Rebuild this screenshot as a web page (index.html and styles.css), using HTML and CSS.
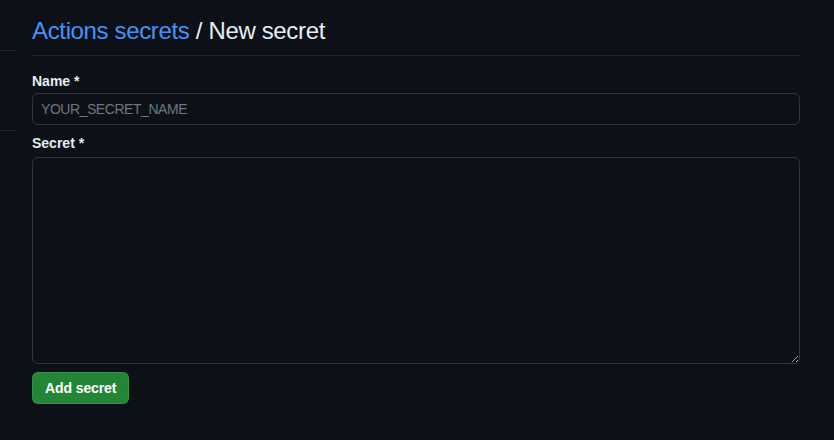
FILE: index.html
```html
<!DOCTYPE html>
<html>
<head>
<meta charset="utf-8">
<link rel="stylesheet" href="styles.css">
</head>
<body>
<div class="page">
  <aside class="sidebar">
    <div class="side-line first"></div>
    <div class="side-line second"></div>
  </aside>
  <main class="content">
    <h1 class="title"><a class="crumb" href="#">Actions secrets</a> / New secret</h1>
    <form class="form">
      <label class="label" for="name">Name *</label>
      <input class="input" id="name" type="text" placeholder="YOUR_SECRET_NAME">
      <label class="label secret-label" for="secret">Secret *</label>
      <textarea class="textarea" id="secret"></textarea>
      <button class="btn" type="button">Add secret</button>
    </form>
  </main>
</div>
</body>
</html>
```
FILE: styles.css
```css
* { box-sizing: border-box; }
html, body {
  margin: 0;
  padding: 0;
  background: #0d1117;
  color: #e6edf3;
  font-family: "Liberation Sans", Arial, sans-serif;
}
.page {
  display: flex;
  width: 834px;
  height: 440px;
}
.sidebar {
  width: 32px;
  flex: none;
  padding-top: 50px;
}
.side-line {
  width: 16px;
  height: 1px;
  background: #21262d;
}
.side-line.second { margin-top: 79px; }
.content {
  width: 768px;
  padding-top: 16px;
}
.title {
  margin: 0;
  font-size: 24px;
  font-weight: 400;
  line-height: 30px;
  padding-bottom: 9px;
  border-bottom: 1px solid #21262d;
  color: #e6edf3;
  letter-spacing: -0.35px;
}
.crumb {
  color: #4493f8;
  text-decoration: none;
}
.form {
  display: flex;
  flex-direction: column;
  align-items: flex-start;
  padding-top: 15px;
}
.label {
  font-size: 14px;
  font-weight: 700;
  line-height: 20px;
  margin-bottom: 2px;
  color: #e6edf3;
}
.secret-label { margin-top: 8px; margin-bottom: 4px; }
.input {
  width: 768px;
  height: 32px;
  background: #0d1117;
  border: 1px solid #30363d;
  border-radius: 6px;
  padding: 0 8px;
  font-family: inherit;
  font-size: 14px;
  color: #e6edf3;
  outline: none;
  letter-spacing: -0.45px;
}
.input::placeholder { color: #6e7681; }
.textarea {
  width: 768px;
  height: 207px;
  background: #0d1117;
  border: 1px solid #30363d;
  border-radius: 6px;
  padding: 8px;
  font-family: inherit;
  font-size: 14px;
  color: #e6edf3;
  outline: none;
  resize: vertical;
  margin: 0;
  display: block;
}
.btn {
  margin-top: 8px;
  height: 32px;
  padding: 0 12px;
  background: #238636;
  border: 1px solid rgba(240,246,252,0.1);
  border-radius: 6px;
  color: #ffffff;
  font-family: inherit;
  font-size: 14px;
  font-weight: 700;
  letter-spacing: -0.1px;
  cursor: pointer;
}
```
